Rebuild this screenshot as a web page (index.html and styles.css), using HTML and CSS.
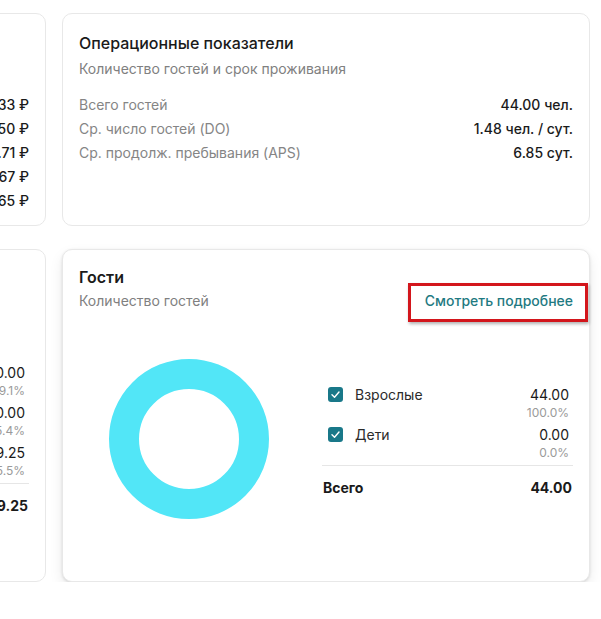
FILE: index.html
```html
<!DOCTYPE html>
<html lang="ru">
<head>
    <meta charset="UTF-8">
    <meta name="viewport" content="width=device-width, initial-scale=1.0">
    <title>Отчёт - Показатели</title>
    <link rel="stylesheet" href="styles.css">
</head>
<body>
    <main class="dashboard">
        <!-- финансы (колонка слева, уходит за край) -->
        <section class="card">
            <h2 class="card-title">Финансовые показатели</h2>
            <p class="card-subtitle">Доход и средние тарифы</p>
            <div class="stats">
                <div class="stat"><span>Выручка за номер</span><b>4 818.33 ₽</b></div>
                <div class="stat"><span>Средний тариф (ADR)</span><b>7 500.50 ₽</b></div>
                <div class="stat"><span>Доход на номер (RevPAR)</span><b>1 094.71 ₽</b></div>
                <div class="stat"><span>Доход на гостя</span><b>3 204.67 ₽</b></div>
                <div class="stat"><span>Доход на гостя в сутки</span><b>2 158.65 ₽</b></div>
            </div>
        </section>

        <section class="card">
            <h2 class="card-title">Операционные показатели</h2>
            <p class="card-subtitle">Количество гостей и срок проживания</p>
            <div class="stats">
                <div class="stat"><span>Всего гостей</span><b>44.00 чел.</b></div>
                <div class="stat"><span>Ср. число гостей (DO)</span><b>1.48 чел. / сут.</b></div>
                <div class="stat"><span>Ср. продолж. пребывания (APS)</span><b>6.85 сут.</b></div>
            </div>
        </section>

        <section class="card chart-card">
            <div class="card-head">
                <div>
                    <h2 class="card-title strong">Доходы</h2>
                    <p class="card-subtitle">Структура выручки</p>
                </div>
            </div>
            <div class="chart-body">
                <div class="chart">
                    <svg width="160" height="160" viewBox="0 0 160 160">
                        <circle cx="80" cy="80" r="65" fill="none" stroke="#4f8df7" stroke-width="30"/>
                    </svg>
                </div>
                <div class="legend">
                    <div class="legend-item">
                        <span class="check"><svg viewBox="0 0 15 15"><polyline points="4,7.8 6.5,10.2 11,5" fill="none" stroke="#fff" stroke-width="1.4" stroke-linecap="round" stroke-linejoin="round"/></svg></span>
                        <span class="legend-label">Питание</span>
                        <span class="legend-value">30 000.00<small>9.1%</small></span>
                    </div>
                    <div class="legend-item">
                        <span class="check"><svg viewBox="0 0 15 15"><polyline points="4,7.8 6.5,10.2 11,5" fill="none" stroke="#fff" stroke-width="1.4" stroke-linecap="round" stroke-linejoin="round"/></svg></span>
                        <span class="legend-label">Услуги</span>
                        <span class="legend-value">83 800.00<small>25.4%</small></span>
                    </div>
                    <div class="legend-item">
                        <span class="check"><svg viewBox="0 0 15 15"><polyline points="4,7.8 6.5,10.2 11,5" fill="none" stroke="#fff" stroke-width="1.4" stroke-linecap="round" stroke-linejoin="round"/></svg></span>
                        <span class="legend-label">Проживание</span>
                        <span class="legend-value">216 209.25<small>65.5%</small></span>
                    </div>
                    <div class="legend-total"><span>Всего</span><span>330 009.25</span></div>
                </div>
            </div>
        </section>

        <section class="card chart-card hovered">
            <div class="card-head">
                <div>
                    <h2 class="card-title strong">Гости</h2>
                    <p class="card-subtitle">Количество гостей</p>
                </div>
                <a class="more-link marked" href="#">Смотреть подробнее</a>
            </div>
            <div class="chart-body">
                <div class="chart">
                    <svg width="160" height="160" viewBox="0 0 160 160">
                        <circle cx="80" cy="80" r="65" fill="none" stroke="#52e6f7" stroke-width="30"/>
                    </svg>
                </div>
                <div class="legend short">
                    <div class="legend-item">
                        <span class="check"><svg viewBox="0 0 15 15"><polyline points="4,7.8 6.5,10.2 11,5" fill="none" stroke="#fff" stroke-width="1.4" stroke-linecap="round" stroke-linejoin="round"/></svg></span>
                        <span class="legend-label">Взрослые</span>
                        <span class="legend-value">44.00<small>100.0%</small></span>
                    </div>
                    <div class="legend-item">
                        <span class="check"><svg viewBox="0 0 15 15"><polyline points="4,7.8 6.5,10.2 11,5" fill="none" stroke="#fff" stroke-width="1.4" stroke-linecap="round" stroke-linejoin="round"/></svg></span>
                        <span class="legend-label">Дети</span>
                        <span class="legend-value">0.00<small>0.0%</small></span>
                    </div>
                    <div class="legend-total"><span>Всего</span><span>44.00</span></div>
                </div>
            </div>
        </section>
    </main>
</body>
</html>
```

FILE: styles.css
```css
body {
    margin: 0;
    padding: 0;
    background-color: #fff;
    color: #1a1a1a;
    font-family: Inter, "Noto Sans", sans-serif;
    overflow: hidden;
}
.dashboard {
    display: grid;
    grid-template-columns: 528px 528px;
    gap: 23px 16px;
    margin-left: -482px;
    padding-top: 13px;
}
.card {
    box-sizing: border-box;
    background-color: #fff;
    border: 1px solid #e8e8e8;
    border-radius: 10px;
    padding: 17px 16px 12px;
}
.card.chart-card {
    padding: 15px 16px 15px;
}
.card.hovered {
    box-shadow: 0 6px 14px rgba(0, 0, 0, 0.08), 0 1px 3px rgba(0, 0, 0, 0.12);
}
.card-title {
    margin: 0;
    font-size: 16px;
    line-height: 24px;
    font-weight: 500;
}
.card-title.strong {
    font-weight: 600;
}
.card-subtitle {
    margin: 4px 0 0;
    font-size: 14px;
    line-height: 20px;
    color: #808080;
}
.chart-card .card-subtitle {
    margin-top: 2px;
}
.stats {
    margin-top: 14px;
}
.stat {
    display: flex;
    justify-content: space-between;
    font-size: 14px;
    line-height: 24px;
}
.stat span {
    color: #858585;
}
.stat b {
    font-weight: 500;
}
.card-head {
    display: flex;
    justify-content: space-between;
    align-items: flex-end;
}
.more-link {
    position: relative;
    display: inline-block;
    font-size: 14px;
    line-height: 20px;
    font-weight: 500;
    color: #1f7a82;
    text-decoration: none;
}
/* красная рамка-пометка поверх ссылки */
.more-link.marked::after {
    content: "";
    position: absolute;
    top: -8px;
    bottom: -11px;
    left: -17px;
    right: -15px;
    border: 3px solid #d3161c;
    box-shadow: 1px 2px 3px rgba(0, 0, 0, 0.3);
}
.chart-body {
    display: flex;
    align-items: center;
    gap: 23px;
    height: 255px;
}
.chart {
    width: 220px;
    display: flex;
    justify-content: center;
}
.chart svg {
    display: block;
}
.legend {
    flex: 1;
}
.legend.short {
    margin-top: 4px;
}
.legend-item {
    display: grid;
    grid-template-columns: 15px 1fr auto;
    column-gap: 12px;
    padding: 2px 4px 2px 6px;
    font-size: 14px;
    line-height: 20px;
}
.check {
    width: 15px;
    height: 15px;
    margin-top: 2px;
    border-radius: 3px;
    background-color: #197889;
}
.check svg {
    display: block;
    width: 15px;
    height: 15px;
}
.legend-label {
    color: #2b2b2b;
}
.legend-value {
    text-align: right;
    color: #1a1a1a;
}
.legend-value small {
    display: block;
    font-size: 12px;
    line-height: 16px;
    color: #9a9a9a;
}
.legend-total {
    display: flex;
    justify-content: space-between;
    margin-top: 2px;
    padding: 12px 1px 0;
    border-top: 1px solid #e6e6e6;
    font-size: 14px;
    line-height: 20px;
    font-weight: 700;
}
```
